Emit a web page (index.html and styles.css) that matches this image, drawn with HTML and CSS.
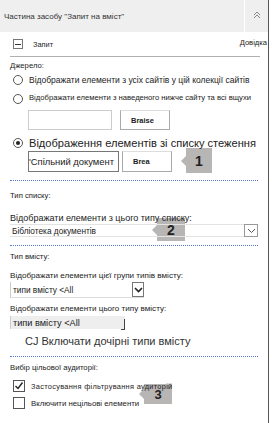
FILE: index.html
```html
<!DOCTYPE html>
<html lang="uk">
<head>
    <meta charset="UTF-8">
    <title>Частина засобу "Запит на вміст"</title>
    <link rel="stylesheet" href="styles.css">
</head>
<body>
    <div class="panel">
        <div class="panel-head">
            <div class="panel-title">Частина засобу "Запит на вміст"</div>
            <div class="collapse">
                <svg width="8" height="8" viewBox="0 0 8 8"><path d="M1 4 L4 1 L7 4 M1 7 L4 4 L7 7" fill="none" stroke="#888" stroke-width="1"/></svg>
            </div>
        </div>

        <div class="query-row">
            <span class="minus-box"></span>
            <span class="query-name">Запит</span>
            <span class="help">Довідка</span>
        </div>

        <div class="callout n1">1</div>
        <div class="callout n2">2</div>
        <div class="callout n3">3</div>

        <div class="content">
            <div class="small-label src-label">Джерело:</div>

            <div class="radio-row r1">
                <span class="radio"></span>
                <span class="opt-text">Відображати елементи з усіх сайтів у цій колекції сайтів</span>
            </div>
            <div class="radio-row r2">
                <span class="radio"></span>
                <span class="opt-text small">Відображати елементи з наведеного нижче сайту та всі вщухи</span>
            </div>
            <div class="field-row f1">
                <span class="text-box"></span>
                <span class="btn">Braise</span>
            </div>
            <div class="radio-row r3">
                <span class="radio checked"></span>
                <span class="opt-text big">Відображення елементів зі списку стеження</span>
            </div>
            <div class="field-row f2">
                <span class="text-box doc">'Спільний документ</span>
                <span class="btn">Brea</span>
            </div>

            <div class="dotted d1"></div>

            <div class="small-label lt-label">Тип списку:</div>
            <div class="field-label big-label">Відображати елементи з цього типу списку:</div>
            <div class="select wide">
                <span class="select-text">Бібліотека документів</span>
                <span class="drop">
                    <svg width="9" height="6" viewBox="0 0 9 6"><path d="M1 1 L4.5 4.5 L8 1" fill="none" stroke="#555" stroke-width="1"/></svg>
                </span>
            </div>

            <div class="dotted d2"></div>

            <div class="small-label ct-label">Тип вмісту:</div>
            <div class="field-label mid-label">Відображати елементи цієї групи типів вмісту:</div>
            <div class="select narrow">
                <span class="select-text">типи вмісту &lt;All</span>
                <span class="drop dark">
                    <svg width="9" height="6" viewBox="0 0 9 6"><path d="M1 1 L4.5 4.5 L8 1" fill="none" stroke="#222" stroke-width="1.6"/></svg>
                </span>
            </div>
            <div class="field-label sm-label">Відображати елементи цього типу вмісту:</div>
            <div class="grey-box">
                <span class="select-text">типи вмісту &lt;All</span>
                <span class="bracket"></span>
            </div>
            <div class="include-row">CJ Включати дочірні типи вмісту</div>

            <div class="dotted d3"></div>

            <div class="small-label aud-label">Вибір цільової аудиторії:</div>
            <div class="check-row c1">
                <span class="check">
                    <svg width="10" height="10" viewBox="0 0 10 10"><path d="M1.5 5 L4 7.5 L8.5 1.5" fill="none" stroke="#222" stroke-width="1.4"/></svg>
                </span>
                <span class="opt-text spaced">Застосування фільтрування аудиторій</span>
            </div>
            <div class="check-row c2">
                <span class="check"></span>
                <span class="opt-text">Включити нецільові елементи</span>
            </div>
        </div>
    </div>
</body>
</html>
```

FILE: styles.css
```css
body {
    margin: 0;
    font-family: "Liberation Sans", Arial, sans-serif;
    color: #222;
    background: #fff;
}
.panel {
    position: relative;
    width: 268px;
    height: 423px;
    border-right: 1px solid #555;
}
.panel-head {
    display: flex;
    height: 32px;
    background-color: #efefef;
}
.panel-title {
    flex: 1;
    display: flex;
    align-items: center;
    padding-left: 4px;
    font-size: 8px;
    color: #333;
}
.collapse {
    width: 24px;
    border-left: 1px solid #fff;
    display: flex;
    justify-content: center;
    padding-top: 11px;
    box-sizing: border-box;
}
.query-row {
    display: flex;
    align-items: center;
    height: 24px;
    margin: 0 8px 0 10px;
    border-bottom: 1px solid #b0b0b0;
}
.minus-box {
    width: 8px;
    height: 8px;
    margin-left: 3px;
    border: 1px solid #777;
    position: relative;
}
.minus-box::after {
    content: "";
    position: absolute;
    left: 1px;
    right: 1px;
    top: 4px;
    height: 1px;
    background: #333;
}
.query-name {
    margin-left: 10px;
    font-size: 7.4px;
}
.help {
    margin-left: auto;
    margin-right: -7px;
    font-size: 7.6px;
    margin-top: -4px;
}
.content {
    position: relative;
    padding: 0 10px;
}
.small-label {
    font-size: 7.7px;
    height: 14px;
    line-height: 14px;
}
.src-label { margin-top: 2px; }
.radio-row {
    display: flex;
    align-items: center;
    height: 16px;
}
.r1 { margin-top: -1px; }
.r2 { margin-top: 3px; }
.r3 { margin-top: 5px; }
.radio {
    width: 8px;
    height: 8px;
    margin-left: 3px;
    border: 1px solid #555;
    border-radius: 50%;
    position: relative;
    flex: none;
    background: #fff;
}
.radio.checked::after {
    content: "";
    position: absolute;
    left: 2px;
    top: 2px;
    width: 4px;
    height: 4px;
    border-radius: 50%;
    background: #222;
}
.opt-text {
    margin-left: 6px;
    font-size: 8.5px;
    white-space: nowrap;
}
.opt-text.small { font-size: 7.66px; margin-top: -3px; }
.opt-text.big { font-size: 11.1px; }
.field-row {
    display: flex;
    padding-left: 18px;
    gap: 8px;
}
.f1 { margin-top: 3px; height: 20px; }
.f2 { margin-top: 0; height: 21px; }
.text-box {
    width: 82px;
    border: 1px solid #ccc;
    font-size: 9.4px;
    display: flex;
    align-items: center;
    background: #fff;
}
.text-box.doc {
    width: 89px;
    border-color: #777;
    margin-right: -5px;
    white-space: nowrap;
    overflow: hidden;
}
.btn {
    width: 50px;
    border: 1px solid #aaa;
    border-top-color: #ddd;
    font-size: 7.5px;
    font-weight: bold;
    display: flex;
    align-items: center;
    padding-left: 10px;
    box-sizing: border-box;
    background: #fff;
}
.dotted {
    border-top: 1px dotted #5577cc;
}
.d1 { margin-top: 8px; }
.d2 { margin-top: 8px; }
.d3 { margin-top: 7px; }
.lt-label { margin-top: 8px; }
.ct-label { margin-top: 4px; }
.field-label {
    white-space: nowrap;
}
.big-label {
    font-size: 9px;
    margin-top: 9px;
    height: 12px;
    line-height: 12px;
}
.mid-label {
    font-size: 8.1px;
    margin-top: 6px;
    height: 12px;
    line-height: 12px;
}
.sm-label {
    font-size: 8.1px;
    margin-top: 5px;
    height: 12px;
    line-height: 12px;
}
.select {
    display: flex;
    align-items: center;
}
.select.wide {
    height: 11px;
    border-top: 1px solid #e3e3e3;
    border-bottom: 1px solid #e3e3e3;
}
.select.narrow {
    width: 133px;
    height: 15px;
    border-left: 1px solid #ccc;
    border-bottom: 1px solid #ddd;
}
.select-text {
    font-size: 8.3px;
    padding-left: 2px;
    flex: 1;
}
.drop {
    width: 14px;
    height: 13px;
    border: 1px solid #999;
    box-sizing: border-box;
    display: flex;
    align-items: center;
    justify-content: center;
    background: #fff;
}
.drop.dark {
    height: 15px;
    width: 12px;
    border-color: #777;
}
.grey-box {
    display: flex;
    align-items: center;
    width: 114px;
    height: 13px;
    margin-top: 1px;
    background: #eeeeee;
    border-left: 1px solid #ccc;
}
.grey-box .select-text { font-size: 9.2px; }
.bracket {
    width: 3px;
    height: 10px;
    margin-top: 3px;
    border-right: 1px solid #444;
    border-bottom: 1px solid #444;
}
.include-row {
    font-size: 11px;
    color: #333;
    padding-left: 15px;
    margin-top: 4px;
    height: 16px;
    line-height: 16px;
}
.aud-label { margin-top: 4px; }
.check-row {
    display: flex;
    align-items: center;
    height: 14px;
}
.c1 { margin-top: 4px; }
.c2 { margin-top: 3px; }
.check {
    width: 10px;
    height: 10px;
    margin-left: 3px;
    border: 1px solid #555;
    flex: none;
    display: flex;
    align-items: center;
    justify-content: center;
    background: #fff;
}
.check-row .opt-text { font-size: 7.8px; }
.check-row .opt-text.spaced { font-size: 7.4px; letter-spacing: 0.3px; }
.callout {
    position: absolute;
    background: #b8b5b5;
    font-weight: bold;
    font-size: 14px;
    display: flex;
    align-items: center;
    justify-content: center;
}
.callout::before {
    content: "";
    position: absolute;
    left: -5px;
    top: 50%;
    margin-top: -5px;
    border-top: 5px solid transparent;
    border-bottom: 5px solid transparent;
    border-right: 5px solid #b8b5b5;
}
.callout.n1 { left: 186px; top: 148px; width: 26px; height: 25px; }
.callout.n2 { left: 157px; top: 218px; width: 28px; height: 23px; }
.callout.n3 { left: 144px; top: 384px; width: 28px; height: 20px; font-size: 13px; }
```
